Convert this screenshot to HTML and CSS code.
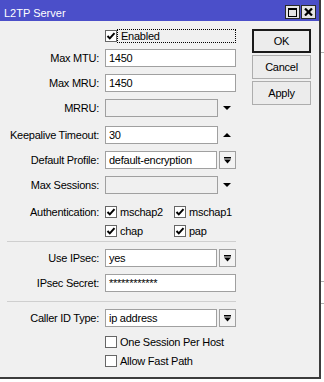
FILE: index.html
```html
<!DOCTYPE html>
<html>
<head>
<meta charset="utf-8">
<link rel="stylesheet" href="styles.css">
</head>
<body>
<div class="window">
  <div class="titlebar">
    <span class="title">L2TP Server</span>
    <div class="tbtns">
      <span class="tbtn"><svg width="9" height="9" viewBox="0 0 9 9"><rect x="0.5" y="0.5" width="8" height="8" fill="none" stroke="#000" stroke-width="1"/><rect x="0" y="0" width="9" height="2" fill="#000"/></svg></span>
      <span class="tbtn"><svg width="9" height="8" viewBox="0 0 9 8"><path d="M1 0.5 L8 7.5 M8 0.5 L1 7.5" stroke="#000" stroke-width="2.2" fill="none"/></svg></span>
    </div>
  </div>
  <div class="content">
    <div class="form">
      <div class="row cbrow r-enabled">
        <span class="lbl"></span>
        <span class="cb"><svg width="10" height="10" viewBox="0 0 10 10"><polyline points="1.5,5 3.8,7.4 8.5,2.2" fill="none" stroke="#000" stroke-width="2"/></svg></span>
        <span class="focus">Enabled</span>
      </div>
      <div class="row r-mtu"><span class="lbl">Max MTU:</span><span class="field full">1450</span></div>
      <div class="row r-mru"><span class="lbl">Max MRU:</span><span class="field full">1450</span></div>
      <div class="row r-mrru"><span class="lbl">MRRU:</span><span class="field short disabled"></span><span class="arrow"><svg width="8" height="4" viewBox="0 0 8 4"><polygon points="0,0 8,0 4,4" fill="#000"/></svg></span></div>
      <div class="row r-keep"><span class="lbl">Keepalive Timeout:</span><span class="field short">30</span><span class="arrow"><svg width="8" height="4" viewBox="0 0 8 4"><polygon points="0,4 8,4 4,0" fill="#000"/></svg></span></div>
      <div class="row r-prof"><span class="lbl">Default Profile:</span><span class="field withbtn">default-encryption</span><span class="ddbtn"><svg width="7" height="7" viewBox="0 0 7 7"><rect x="0" y="0" width="7" height="1.5" fill="#000"/><polygon points="0,2.5 7,2.5 3.5,6.5" fill="#000"/></svg></span></div>
      <div class="row r-sess"><span class="lbl">Max Sessions:</span><span class="field short disabled"></span><span class="arrow"><svg width="8" height="4" viewBox="0 0 8 4"><polygon points="0,0 8,0 4,4" fill="#000"/></svg></span></div>
      <div class="row cbrow r-auth1">
        <span class="lbl">Authentication:</span>
        <span class="opt"><span class="cb"><svg width="10" height="10" viewBox="0 0 10 10"><polyline points="1.5,5 3.8,7.4 8.5,2.2" fill="none" stroke="#000" stroke-width="2"/></svg></span><span class="otext">mschap2</span></span>
        <span class="opt"><span class="cb"><svg width="10" height="10" viewBox="0 0 10 10"><polyline points="1.5,5 3.8,7.4 8.5,2.2" fill="none" stroke="#000" stroke-width="2"/></svg></span><span class="otext">mschap1</span></span>
      </div>
      <div class="row cbrow r-auth2">
        <span class="lbl"></span>
        <span class="opt"><span class="cb"><svg width="10" height="10" viewBox="0 0 10 10"><polyline points="1.5,5 3.8,7.4 8.5,2.2" fill="none" stroke="#000" stroke-width="2"/></svg></span><span class="otext">chap</span></span>
        <span class="opt"><span class="cb"><svg width="10" height="10" viewBox="0 0 10 10"><polyline points="1.5,5 3.8,7.4 8.5,2.2" fill="none" stroke="#000" stroke-width="2"/></svg></span><span class="otext">pap</span></span>
      </div>
      <div class="sep s1"></div>
      <div class="row r-ipsec"><span class="lbl">Use IPsec:</span><span class="field withbtn">yes</span><span class="ddbtn"><svg width="7" height="7" viewBox="0 0 7 7"><rect x="0" y="0" width="7" height="1.5" fill="#000"/><polygon points="0,2.5 7,2.5 3.5,6.5" fill="#000"/></svg></span></div>
      <div class="row r-secret"><span class="lbl">IPsec Secret:</span><span class="field full">************</span></div>
      <div class="sep s2"></div>
      <div class="row r-caller"><span class="lbl">Caller ID Type:</span><span class="field withbtn">ip address</span><span class="ddbtn"><svg width="7" height="7" viewBox="0 0 7 7"><rect x="0" y="0" width="7" height="1.5" fill="#000"/><polygon points="0,2.5 7,2.5 3.5,6.5" fill="#000"/></svg></span></div>
      <div class="row cbrow r-one"><span class="lbl"></span><span class="opt wide"><span class="cb"></span><span class="otext">One Session Per Host</span></span></div>
      <div class="row cbrow r-fast"><span class="lbl"></span><span class="opt wide"><span class="cb"></span><span class="otext">Allow Fast Path</span></span></div>
    </div>
    <div class="buttons">
      <div class="btn default">OK</div>
      <div class="btn">Cancel</div>
      <div class="btn">Apply</div>
    </div>
  </div>
</div>
</body>
</html>
```
FILE: styles.css
```css
* { box-sizing: border-box; }
html, body { margin: 0; padding: 0; }
body {
  width: 324px;
  height: 382px;
  overflow: hidden;
  font-family: "Liberation Sans", Arial, sans-serif;
  font-size: 11px;
  letter-spacing: -0.25px;
  color: #000;
  background-color: #fff;
  background-image:
    linear-gradient(#b0b0b0, #b0b0b0),
    linear-gradient(#b0b0b0, #b0b0b0),
    linear-gradient(#b0b0b0, #b0b0b0);
  background-repeat: no-repeat;
  background-size: 100% 1px, 100% 1px, 100% 1px;
  background-position: 0 52px, 0 281px, 0 303px;
}
.window {
  width: 321px;
  height: 379px;
  background: #f0f0f0;
  border-right: 2px solid #3c3c3c;
  border-bottom: 2px solid #3c3c3c;
}
.titlebar {
  height: 21px;
  background: #4b4fc9;
  display: flex;
  align-items: flex-start;
  padding-left: 4px;
  color: #fff;
}
.title {
  margin-top: 7px;
  line-height: 13px;
  font-size: 11px;
  letter-spacing: 0;
}
.tbtns {
  margin-left: auto;
  margin-top: 5px;
  margin-right: 3px;
  display: flex;
  gap: 1px;
}
.tbtn {
  width: 15px;
  height: 14px;
  background: #e4e4e4;
  border: 1px solid #2a2a2a;
  display: flex;
  align-items: center;
  justify-content: center;
}
.content {
  display: flex;
  padding-top: 8px;
}
.form {
  width: 236px;
  display: flex;
  flex-direction: column;
}
.row {
  display: flex;
  align-items: center;
  height: 18px;
  flex: none;
}
.cbrow { height: 14px; }
.lbl {
  width: 99px;
  margin-right: 6px;
  text-align: right;
  flex: none;
  white-space: nowrap;
}
.field {
  height: 18px;
  background: #fff;
  border: 1px solid #a0a0a0;
  padding-left: 3px;
  line-height: 16px;
  white-space: nowrap;
  overflow: hidden;
  flex: none;
}
.field.full { width: 131px; }
.field.short { width: 113px; }
.field.withbtn { width: 112px; }
.field.disabled { background: #f0f0f0; }
.arrow {
  margin-left: 5px;
  display: flex;
  align-items: center;
}
.ddbtn {
  margin-left: 2px;
  width: 17px;
  height: 18px;
  border: 1px solid #a0a0a0;
  background: #f3f3f3;
  display: flex;
  align-items: center;
  justify-content: center;
  flex: none;
}
.cb {
  width: 12px;
  height: 12px;
  border: 1px solid #666;
  background: #fff;
  display: flex;
  align-items: center;
  justify-content: center;
  flex: none;
}
.focus {
  width: 120px;
  height: 14px;
  border: 1px dotted #000;
  padding-left: 3px;
  line-height: 12px;
}
.opt {
  width: 69px;
  display: flex;
  align-items: center;
  flex: none;
}
.opt.wide { width: 131px; }
.otext {
  margin-left: 3px;
  white-space: nowrap;
}
.sep {
  height: 1px;
  background: #cfcfcf;
  margin-left: 7px;
  width: 229px;
  flex: none;
}
.r-mtu { margin-top: 6px; }
.r-mru { margin-top: 7px; }
.r-mrru { margin-top: 7px; }
.r-keep { margin-top: 9px; }
.r-prof { margin-top: 7px; }
.r-sess { margin-top: 7px; }
.r-auth1 { margin-top: 11px; }
.r-auth2 { margin-top: 5px; }
.s1 { margin-top: 3px; }
.r-ipsec { margin-top: 7px; }
.r-secret { margin-top: 7px; }
.s2 { margin-top: 9px; }
.r-caller { margin-top: 7px; }
.r-one { margin-top: 8px; }
.r-fast { margin-top: 5px; }
.buttons {
  margin-left: 16px;
  display: flex;
  flex-direction: column;
  gap: 2px;
}
.btn {
  width: 59px;
  height: 24px;
  border: 1px solid #adadad;
  background: #ececec;
  display: flex;
  align-items: center;
  justify-content: center;
}
.btn.default {
  border: 2px solid #1a1a1a;
}
```
